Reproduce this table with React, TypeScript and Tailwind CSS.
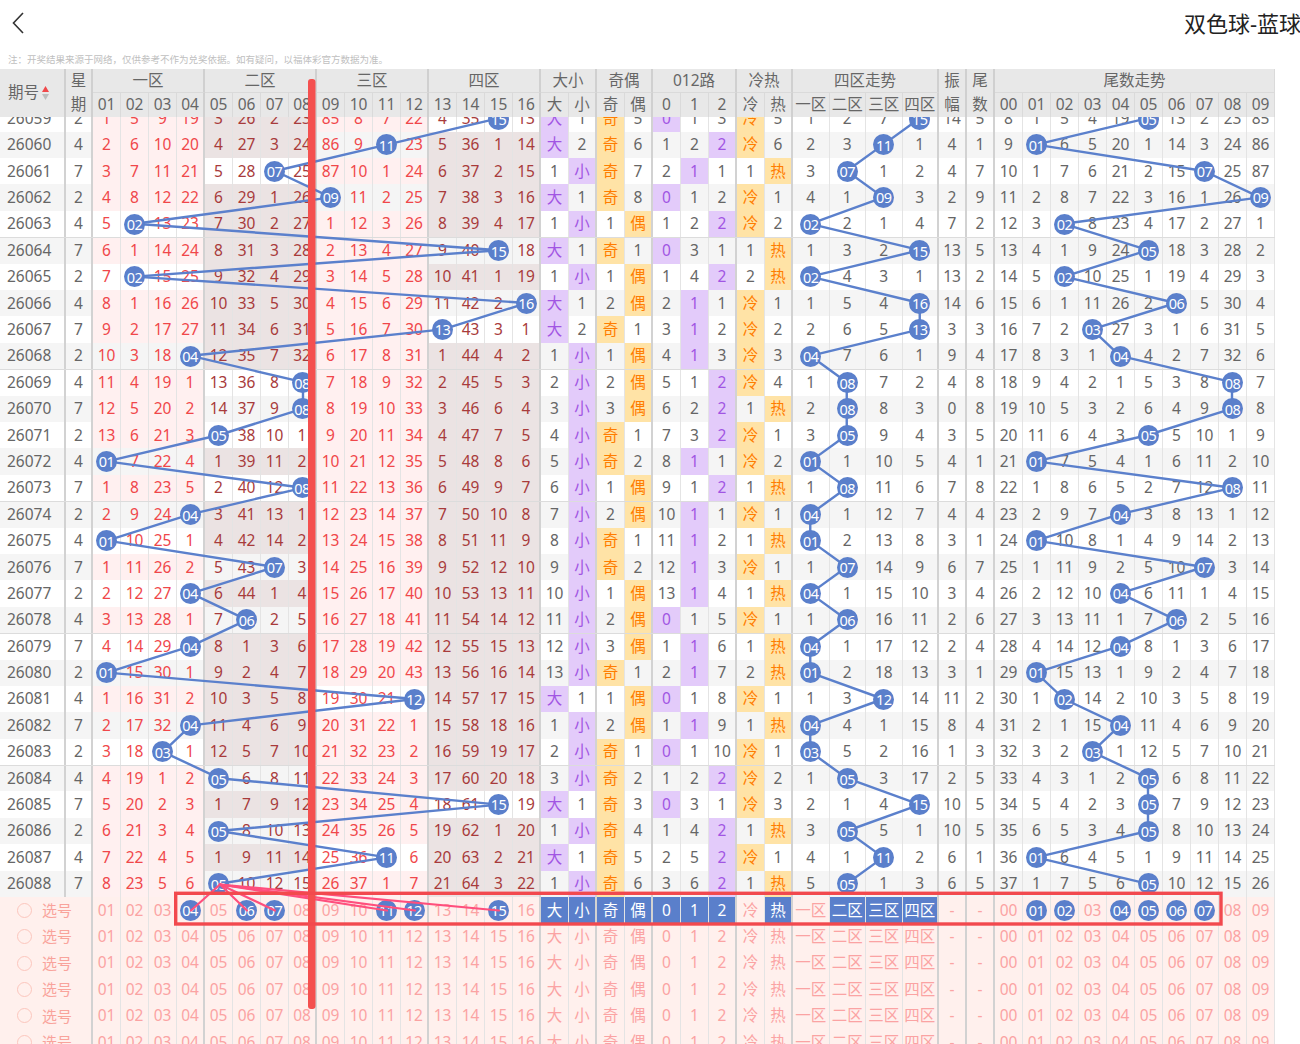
import React from "react";

const BALLS = [15, 11, 7, 9, 2, 15, 2, 16, 13, 4, 8, 8, 5, 1, 8, 4, 1, 7, 4, 6, 4, 1, 12, 4, 3, 5, 15, 5, 11, 5];
const HOT = "冷冷热冷冷热热冷冷冷冷热冷冷热冷热冷热冷热热冷热冷冷冷热冷热";
const ROW_H = 26.4;
const pad = (n: number) => (n < 10 ? "0" + n : "" + n);

interface RowData {
  period: number;
  week: number;
  b: number;
  blue: number[];
  ds: number[];
  jo: number[];
  r: number[];
  lr: number[];
  zone: number[];
  tail: number[];
  amp: number;
}

function buildRows(): RowData[] {
  let blue = [1, 5, 9, 19, 3, 26, 2, 23, 85, 8, 7, 22, 4, 35, 0, 13];
  let ds = [0, 1];
  let jo = [0, 5];
  let r = [0, 1, 3];
  let lr = [0, 5];
  let zone = [1, 2, 7, 0];
  let tail = [8, 1, 5, 4, 19, 0, 13, 2, 23, 85];
  let amp = 14;
  const inc = (a: number[], h: number) => a.map((v, k) => (k === h ? 0 : v + 1));
  const rows: RowData[] = [];
  for (let i = 0; i < BALLS.length; i++) {
    const b = BALLS[i];
    if (i > 0) {
      blue = inc(blue, b - 1);
      ds = inc(ds, b >= 9 ? 0 : 1);
      jo = inc(jo, b % 2 === 1 ? 0 : 1);
      r = inc(r, b % 3);
      lr = inc(lr, HOT[i] === "冷" ? 0 : 1);
      zone = inc(zone, Math.floor((b - 1) / 4));
      tail = inc(tail, b % 10);
      amp = Math.abs(b - BALLS[i - 1]);
    }
    rows.push({ period: 26059 + i, week: [2, 4, 7][i % 3], b, blue, ds, jo, r, lr, zone, tail, amp });
  }
  return rows;
}

const THIN = "border-r border-r-[#e4e4e4]";
const THICK = "border-r-2 border-r-[#d2d2d2]";
const PURPLE = "bg-[#e3cbfa] text-[#a155e3]";
const ORANGE = "bg-[#ffe3a6] text-[#ff7d00]";

function Ball({ t }: { t: string }) {
  return (
    <span className="relative z-20 flex h-[21px] w-[21px] shrink-0 items-center justify-center rounded-full bg-[#5a7fcb] text-[14.5px] leading-none tracking-[-0.6px] text-white">
      {t}
    </span>
  );
}

function C({
  w = "w-[28px]",
  edge = false,
  cls = "",
  children,
}: {
  w?: string;
  edge?: boolean;
  cls?: string;
  children?: React.ReactNode;
}) {
  return (
    <div className={`${w} ${edge ? THICK : THIN} ${cls} flex h-full shrink-0 items-center justify-center`}>
      {children}
    </div>
  );
}

function DataRow({ r }: { r: RowData }) {
  const stripe = r.period % 2 === 0 ? "bg-[#f5f5f5]" : "bg-white";
  const hitZone = Math.floor((r.b - 1) / 4);
  const sep = (r.period - 26064) % 5 === 0;
  return (
    <div className={`flex h-[26.4px] text-[15.5px] text-[#666] ${sep ? "border-t border-t-[#dcdcdc]" : ""}`}>
      <div className={`w-[66px] ${THICK} ${stripe} flex h-full shrink-0 items-center pl-[7px]`}>{r.period}</div>
      <C w="w-[27px]" edge cls={stripe}>
        {r.week}
      </C>
      {r.blue.map((v, k) => {
        const z = Math.floor(k / 4);
        const bg = z === hitZone ? stripe : z % 2 === 0 ? "bg-[#fff0f0]" : "bg-[#ebe3e3]";
        const tc = z % 2 === 0 ? "text-[#f0474a]" : "text-[#a83b3b]";
        return (
          <C key={k} edge={k % 4 === 3} cls={`${bg} ${tc}`}>
            {v === 0 ? <Ball t={pad(k + 1)} /> : v}
          </C>
        );
      })}
      {r.ds.map((v, k) => (
        <C key={"ds" + k} edge={k === 1} cls={v === 0 ? PURPLE : stripe}>
          {v === 0 ? ["大", "小"][k] : v}
        </C>
      ))}
      {r.jo.map((v, k) => (
        <C key={"jo" + k} edge={k === 1} cls={v === 0 ? ORANGE : stripe}>
          {v === 0 ? ["奇", "偶"][k] : v}
        </C>
      ))}
      {r.r.map((v, k) => (
        <C key={"r" + k} edge={k === 2} cls={v === 0 ? PURPLE : stripe}>
          {v === 0 ? String(k) : v}
        </C>
      ))}
      {r.lr.map((v, k) => (
        <C key={"lr" + k} edge={k === 1} cls={v === 0 ? ORANGE : stripe}>
          {v === 0 ? ["冷", "热"][k] : v}
        </C>
      ))}
      {r.zone.map((v, k) => (
        <C key={"z" + k} w="w-[36.5px]" edge={k === 3} cls={stripe}>
          {v === 0 ? <Ball t={pad(r.b)} /> : v}
        </C>
      ))}
      <C edge cls={stripe}>
        {r.amp}
      </C>
      <C edge cls={stripe}>
        {r.b % 10}
      </C>
      {r.tail.map((v, k) => (
        <C key={"t" + k} cls={stripe}>
          {v === 0 ? <Ball t={pad(k)} /> : v}
        </C>
      ))}
    </div>
  );
}

const SEL_BLUE = [4, 6, 7, 11, 12, 15];
const SEL_TAIL = [1, 2, 4, 5, 6, 7];
const SEL_TXT = ["大", "小", "奇", "偶", "0", "1", "2", "热", "二区", "三区", "四区"];

function SelRow({ active }: { active: boolean }) {
  const on = "bg-[#5a7fcb] text-white";
  const txt = (label: string) => (active && SEL_TXT.includes(label) ? on : "");
  return (
    <div className="flex h-[26.4px] bg-[#fff0ed] text-[15.5px] text-[#fba3a3]">
      <div className={`w-[93px] ${THICK} flex h-full shrink-0 items-center`}>
        <span className="ml-[17px] h-[15px] w-[15px] rounded-full border border-[#fcc6bd]" />
        <span className="ml-[10px] text-[15px] text-[#f9a39b]">选号</span>
      </div>
      {Array.from({ length: 16 }, (_, k) => (
        <C key={k} edge={k % 4 === 3}>
          {active && SEL_BLUE.includes(k + 1) ? <Ball t={pad(k + 1)} /> : pad(k + 1)}
        </C>
      ))}
      {["大", "小"].map((l, k) => (
        <C key={l} edge={k === 1} cls={txt(l)}>
          {l}
        </C>
      ))}
      {["奇", "偶"].map((l, k) => (
        <C key={l} edge={k === 1} cls={txt(l)}>
          {l}
        </C>
      ))}
      {["0", "1", "2"].map((l, k) => (
        <C key={"n" + l} edge={k === 2} cls={txt(l)}>
          {l}
        </C>
      ))}
      {["冷", "热"].map((l, k) => (
        <C key={l} edge={k === 1} cls={txt(l)}>
          {l}
        </C>
      ))}
      {["一区", "二区", "三区", "四区"].map((l, k) => (
        <C key={l} w="w-[36.5px]" edge={k === 3} cls={txt(l)}>
          {l}
        </C>
      ))}
      <C edge>-</C>
      <C edge>-</C>
      {Array.from({ length: 10 }, (_, k) => (
        <C key={"t" + k}>{active && SEL_TAIL.includes(k) ? <Ball t={pad(k)} /> : pad(k)}</C>
      ))}
    </div>
  );
}

function TrendLines({ rows }: { rows: RowData[] }) {
  const y = (i: number) => i * ROW_H + ROW_H / 2;
  const segs: { x1: number; y1: number; x2: number; y2: number }[] = [];
  const bx = (b: number) => 93 + 28 * (b - 1) + 14;
  const zx = (b: number) => 792 + 36.5 * Math.floor((b - 1) / 4) + 18.25;
  const tx = (b: number) => 994 + 28 * (b % 10) + 14;
  for (let i = 1; i < rows.length; i++) {
    const a = rows[i - 1].b;
    const b = rows[i].b;
    segs.push({ x1: bx(a), y1: y(i - 1), x2: bx(b), y2: y(i) });
    segs.push({ x1: zx(a), y1: y(i - 1), x2: zx(b), y2: y(i) });
    segs.push({ x1: tx(a), y1: y(i - 1), x2: tx(b), y2: y(i) });
  }
  return (
    <svg className="pointer-events-none absolute left-0 top-0 z-10" width={1275} height={rows.length * ROW_H}>
      {segs.map((s, k) => (
        <line key={k} {...s} stroke="#5b80cc" strokeWidth={2.4} strokeLinecap="round" />
      ))}
    </svg>
  );
}

function HCell({
  w,
  edge = false,
  bottom = false,
  children,
}: {
  w: string;
  edge?: boolean;
  bottom?: boolean;
  children?: React.ReactNode;
}) {
  return (
    <div
      className={`${w} ${edge ? "border-r-2 border-r-[#d0d0d0]" : "border-r border-r-[#dadada]"} ${
        bottom ? "border-b border-b-[#dadada]" : ""
      } flex h-full shrink-0 items-center justify-center`}
    >
      {children}
    </div>
  );
}

function Header() {
  const subs: { l: string; w: string; edge: boolean }[] = [];
  subs.push({ l: "期", w: "w-[27px]", edge: true });
  for (let i = 1; i <= 16; i++) subs.push({ l: pad(i), w: "w-[28px]", edge: i % 4 === 0 });
  ["大", "小"].forEach((l, k) => subs.push({ l, w: "w-[28px]", edge: k === 1 }));
  ["奇", "偶"].forEach((l, k) => subs.push({ l, w: "w-[28px]", edge: k === 1 }));
  ["0", "1", "2"].forEach((l, k) => subs.push({ l, w: "w-[28px]", edge: k === 2 }));
  ["冷", "热"].forEach((l, k) => subs.push({ l, w: "w-[28px]", edge: k === 1 }));
  ["一区", "二区", "三区", "四区"].forEach((l, k) => subs.push({ l, w: "w-[36.5px]", edge: k === 3 }));
  subs.push({ l: "幅", w: "w-[28px]", edge: true });
  subs.push({ l: "数", w: "w-[28px]", edge: true });
  for (let i = 0; i < 10; i++) subs.push({ l: pad(i), w: "w-[28px]", edge: false });

  return (
    <div className="flex h-[47.5px] w-[1275px] bg-[#e8e8e8] text-[15.5px] text-[#666]">
      <div className="flex h-full w-[66px] shrink-0 items-center border-r-2 border-r-[#d0d0d0] pl-[8px]">
        <span>期号</span>
        <span className="ml-[3px] flex flex-col gap-[2px]">
          <svg width="7" height="6" viewBox="0 0 7 6">
            <polygon points="3.5,0 7,6 0,6" fill="#f0484a" />
          </svg>
          <svg width="7" height="6" viewBox="0 0 7 6">
            <polygon points="0,0 7,0 3.5,6" fill="#bdbdbd" />
          </svg>
        </span>
      </div>
      <div className="flex flex-col">
        <div className="flex h-[24px]">
          <HCell w="w-[27px]" edge>
            星
          </HCell>
          <HCell w="w-[112px]" edge bottom>
            一区
          </HCell>
          <HCell w="w-[112px]" edge bottom>
            二区
          </HCell>
          <HCell w="w-[112px]" edge bottom>
            三区
          </HCell>
          <HCell w="w-[112px]" edge bottom>
            四区
          </HCell>
          <HCell w="w-[56px]" edge bottom>
            大小
          </HCell>
          <HCell w="w-[56px]" edge bottom>
            奇偶
          </HCell>
          <HCell w="w-[84px]" edge bottom>
            012路
          </HCell>
          <HCell w="w-[56px]" edge bottom>
            冷热
          </HCell>
          <HCell w="w-[146px]" edge bottom>
            四区走势
          </HCell>
          <HCell w="w-[28px]" edge>
            振
          </HCell>
          <HCell w="w-[28px]" edge>
            尾
          </HCell>
          <HCell w="w-[280px]" bottom>
            尾数走势
          </HCell>
        </div>
        <div className="flex h-[23.5px]">
          {subs.map((s, k) => (
            <HCell key={k} w={s.w} edge={s.edge}>
              {s.l}
            </HCell>
          ))}
        </div>
      </div>
    </div>
  );
}

function Annotations() {
  const from = { x: 220, y: 884.5 };
  const targets = [191, 247, 275, 387, 415, 499];
  return (
    <svg className="pointer-events-none absolute left-0 top-0 z-30" width={1300} height={1044}>
      {targets.map((x) => (
        <line key={x} x1={from.x} y1={from.y} x2={x} y2={910.5} stroke="#ff4f7d" strokeWidth={2.2} strokeLinecap="round" />
      ))}
      <rect x={308} y={79} width={7.5} height={930} rx={3} fill="#f4504f" />
      <rect x={175.7} y={893.3} width={1045.3} height={30.7} fill="none" stroke="#f2494e" strokeWidth={3.4} />
    </svg>
  );
}

export default function App() {
  const rows = buildRows();
  return (
    <div className="relative h-[1044px] w-[1300px] overflow-hidden bg-white font-['Noto_Sans','Noto_Sans_CJK_SC',sans-serif]">
      <div className="flex h-[45px] items-center justify-between pl-[12px]">
        <svg width="12" height="22" viewBox="0 0 12 22">
          <polyline points="11,1 1.5,11 11,21" fill="none" stroke="#333" strokeWidth={1.6} />
        </svg>
        <span className="mr-[-1px] text-[22px] leading-none text-[#222]">双色球-蓝球</span>
      </div>
      <div className="flex h-[24px] items-center pl-[8px] pt-[6px] text-[9.5px] text-[#c0c0c0]">
        注：开奖结果来源于网络，仅供参考不作为兑奖依据。如有疑问，以福体彩官方数据为准。
      </div>
      <Header />
      <div className="relative h-[927.5px] w-[1275px] overflow-hidden">
        <div className="relative mt-[-11.2px]">
          {rows.map((r) => (
            <DataRow key={r.period} r={r} />
          ))}
          {[0, 1, 2, 3, 4, 5].map((i) => (
            <SelRow key={i} active={i === 0} />
          ))}
          <TrendLines rows={rows} />
        </div>
      </div>
      <Annotations />
    </div>
  );
}
